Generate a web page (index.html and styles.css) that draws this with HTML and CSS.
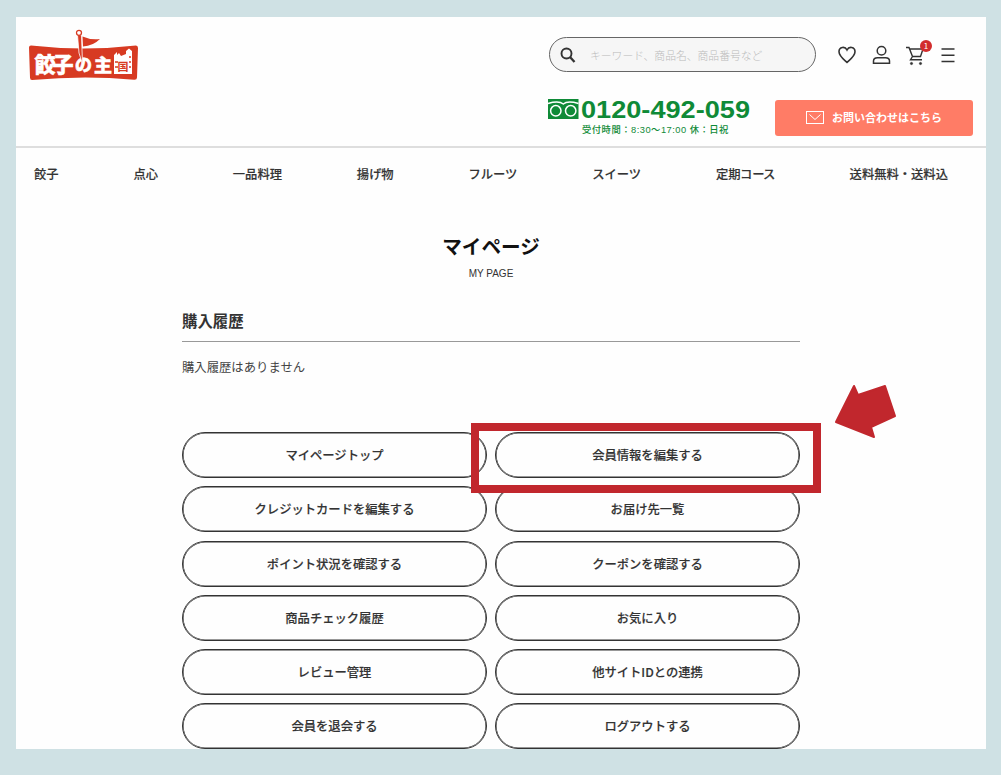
FILE: index.html
```
<!DOCTYPE html>
<html lang="ja">

<head>
    <meta charset="UTF-8">
    <meta name="viewport" content="width=device-width, initial-scale=1.0">
    <title>マイページ | 餃子の王国</title>
    <link rel="stylesheet" href="styles.css">
</head>

<body>
    <div class="page">
        <header class="header">
            <a class="logo" href="#">
                <svg width="112" height="54" viewBox="0 0 112 54">
                    <path d="M3 16.500 Q56 22.500 108 16.500 Q110 16.500 110 19 L109 48.500 Q109 51 106 50.700 Q56 46 4 51 Q2 51 2 48.500 L1 18.500 Q1 16.500 3 16.500Z" fill="#d73a22" />
                    <g class="logo-text">
                        <text x="6.500" y="42.500" font-size="21" textLength="39">餃子</text>
                        <text x="47" y="42" font-size="17">の</text>
                        <text x="66" y="42.500" font-size="18">主</text>
                    </g>
                    <path d="M86 45 V26 L89 23 V26 L91 24 L93 27 L98 25 V22 L101 19.500 L104 22 V45Z" fill="#fff" />
                    <path d="M87 33 H90 M87 38 H90 M101 28 H103 M101 33 H103 M101 38 H103" stroke="#d73a22" stroke-width="1.300" />
                    <text class="logo-country" x="89.500" y="42">国</text>
                    <path d="M49.500 6 L51 24 L54.500 35 L53.500 6Z" fill="#d73a22" stroke="#fff" stroke-width="0.800" />
                    <path d="M54.500 7.500 Q62 11 72 10 Q65 17 55 17.500Z" fill="#d73a22" />
                    <circle cx="51" cy="3.800" r="2.500" fill="#fff" stroke="#d73a22" stroke-width="1.300" />
                </svg>
            </a>
            <div class="header-right">
                <div class="tools">
                    <form class="search">
                        <svg width="16" height="16" viewBox="0 0 16 16" fill="none" stroke="#333">
                            <circle cx="6.500" cy="6.500" r="5" stroke-width="1.900" />
                            <path d="M10 10 L14.500 15" stroke-width="2.300" />
                        </svg>
                        <span>キーワード、商品名、商品番号など</span>
                    </form>
                    <div class="icons">
                        <svg width="20" height="20" viewBox="0 0 20 20" fill="none" stroke="#333" stroke-width="1.600">
                            <path d="M10 17.500 C7 14.700 2 11 2 6.800 C2 1.800 8 1 10 5 C12 1 18 1.800 18 6.800 C18 11 13 14.700 10 17.500Z" />
                        </svg>
                        <svg width="20" height="20" viewBox="0 0 20 20" fill="none" stroke="#333" stroke-width="1.500">
                            <circle cx="9.500" cy="5.700" r="4.300" />
                            <path d="M1.500 18.200 V16 Q1.500 12.700 5.500 12.700 H13.500 Q17.500 12.700 17.500 16 V18.200Z" />
                        </svg>
                        <div class="cart">
                            <svg width="20" height="20" viewBox="0 0 20 20" fill="none" stroke="#333" stroke-width="1.400">
                                <path d="M0 2.500 H3 L6.500 11.500 H14.500 L17 4 H4 M6.500 11.500 L4.500 14.700 H16" />
                                <circle cx="5.500" cy="18.500" r="1.100" fill="#333" stroke-width="0.800" />
                                <circle cx="14.500" cy="18.500" r="1.100" fill="#333" stroke-width="0.800" />
                            </svg>
                            <span class="badge">1</span>
                        </div>
                        <svg width="14" height="16" viewBox="0 0 14 16" stroke="#333" stroke-width="1.500">
                            <path d="M0.500 2 H13.500 M0.500 8.300 H13.500 M0.500 14.500 H13.500" />
                        </svg>
                    </div>
                </div>
                <div class="contact">
                    <div class="phone">
                        <svg width="204" height="22" viewBox="0 0 204 22">
                            <rect width="30.500" height="20" y="0" fill="#0f8a37" />
                            <g fill="none" stroke="#fff" stroke-width="1.500">
                                <path d="M0 4.500 Q11 1.500 15.300 5 Q19.500 1.500 30.500 4.500" />
                                <circle cx="7.800" cy="11.800" r="5.200" />
                                <circle cx="22.700" cy="11.800" r="5.200" />
                            </g>
                            <text class="phone-number" x="33" y="19" textLength="169" lengthAdjust="spacingAndGlyphs">0120-492-059</text>
                        </svg>
                        <p>受付時間：8:30〜17:00 休：日祝</p>
                    </div>
                    <a class="inquiry" href="#">
                        <svg width="18" height="13" viewBox="0 0 18 13" fill="none" stroke="#fff">
                            <rect x="0.500" y="0.500" width="17" height="12" />
                            <path d="M3.500 3.500 L9 8.500 L14.500 3.500" />
                        </svg>
                        <span>お問い合わせはこちら</span>
                    </a>
                </div>
            </div>
        </header>

        <nav class="nav">
            <a href="#">餃子</a>
            <a href="#">点心</a>
            <a href="#">一品料理</a>
            <a href="#" class="tight">揚げ物</a>
            <a href="#">フルーツ</a>
            <a href="#">スイーツ</a>
            <a href="#" class="tight">定期コース</a>
            <a href="#">送料無料・送料込</a>
        </nav>

        <main class="main">
            <h1>マイページ</h1>
            <p class="subtitle">MY PAGE</p>
            <h2>購入履歴</h2>
            <p class="empty">購入履歴はありません</p>
            <div class="menu">
                <a href="#">マイページトップ</a>
                <a href="#" class="edit">会員情報を編集する
                    <span class="frame"></span>
                    <svg class="arrow" width="64" height="56" viewBox="0 0 64 56">
                        <path d="M2 38 L20 2 L24 11 L51 2 L61 32 L37 43 L40 53Z" fill="#c1272d" stroke="#c1272d" stroke-width="2" stroke-linejoin="round" />
                    </svg>
                </a>
                <a href="#">クレジットカードを編集する</a>
                <a href="#">お届け先一覧</a>
                <a href="#">ポイント状況を確認する</a>
                <a href="#">クーポンを確認する</a>
                <a href="#">商品チェック履歴</a>
                <a href="#">お気に入り</a>
                <a href="#">レビュー管理</a>
                <a href="#">他サイトIDとの連携</a>
                <a href="#">会員を退会する</a>
                <a href="#">ログアウトする</a>
            </div>
        </main>
    </div>
</body>

</html>
```
FILE: styles.css
```
* {
    box-sizing: border-box;
}

body {
    margin: 0;
    height: 775px;
    padding: 17px 15px 26px 16px;
    background-color: #cfe1e4;
    color: #333;
    font-family: "Noto Sans CJK JP", sans-serif;
    overflow: hidden;
}

a {
    color: inherit;
    text-decoration: none;
}

h1, h2, p {
    margin: 0;
}

svg {
    display: block;
    flex-shrink: 0;
    overflow: visible;
}

.page {
    height: 732px;
    background-color: #fefefe;
}

.header {
    display: flex;
    justify-content: space-between;
    height: 131px;
    padding: 12px 13px 0 12px;
    border-bottom: 2px solid #dedede;
}

.logo-text {
    fill: #fff;
    stroke: #fff;
    stroke-width: 0.5px;
    font-weight: 900;
}

.logo-country {
    fill: #d73a22;
    font-size: 11px;
    font-weight: bold;
}

.header-right {
    width: 425px;
    padding-top: 8px;
}

.tools {
    display: flex;
    align-items: center;
    padding-left: 1px;
}

.search {
    display: flex;
    align-items: center;
    gap: 14px;
    width: 267px;
    height: 35px;
    padding-left: 10px;
    border: 1px solid #666;
    border-radius: 18px;
    background-color: #f6f6f6;
    color: #bbb;
    font-size: 10.8px;
    font-weight: 300;
}

.icons {
    display: flex;
    align-items: center;
    gap: 14.5px;
    margin-left: 21px;
}

.cart {
    position: relative;
}

.badge {
    position: absolute;
    top: -5px;
    left: 14px;
    width: 12px;
    height: 12px;
    border-radius: 50%;
    background-color: #d22d2d;
    color: #fff;
    font-size: 8px;
    line-height: 12px;
    text-align: center;
}

.contact {
    display: flex;
    justify-content: space-between;
    margin-top: 27px;
}

.phone {
    color: #0f8a37;
}

.phone-number {
    fill: #0f8a37;
    font-family: "Liberation Sans", sans-serif;
    font-size: 23.5px;
    font-weight: bold;
}

.phone p {
    padding: 2px 0 0 34px;
    font-family: "Liberation Sans", "Noto Sans CJK JP", sans-serif;
    font-size: 9.3px;
    font-weight: 500;
    line-height: 14px;
    letter-spacing: 0.5px;
    white-space: nowrap;
}

.inquiry {
    display: flex;
    align-items: center;
    justify-content: center;
    gap: 8px;
    width: 198px;
    height: 36px;
    padding-bottom: 2px;
    margin-top: 1px;
    border-radius: 3px;
    background-color: #ff7c66;
    color: #fff;
    font-size: 11px;
    font-weight: bold;
}

.nav {
    display: flex;
    justify-content: space-between;
    padding: 16px 38px 1px 18px;
    font-size: 12.3px;
    font-weight: 500;
    line-height: 20px;
    -webkit-text-stroke: 0.15px #333;
}

.nav .tight {
    font-feature-settings: "palt";
}

.main {
    width: 618px;
    margin: 45px 0 0 166px;
    text-align: center;
}

h1 {
    color: #111;
    font-size: 19.6px;
    line-height: 32px;
}

.subtitle {
    margin-top: 4px;
    font-family: "Liberation Sans", sans-serif;
    font-size: 10px;
    line-height: 16px;
}

h2 {
    height: 37px;
    margin-top: 23.3px;
    border-bottom: 1px solid #999;
    font-size: 15.4px;
    line-height: 30px;
    text-align: left;
}

.empty {
    margin-top: 15px;
    color: #444;
    font-size: 12.35px;
    line-height: 20px;
    text-align: left;
}

.menu {
    display: grid;
    grid-template-columns: 1fr 1fr;
    grid-auto-rows: 46px;
    gap: 8.1px 8px;
    margin-top: 55.1px;
}

.menu a {
    display: flex;
    align-items: center;
    justify-content: center;
    border: 1px solid #333;
    border-radius: 23px;
    box-shadow: inset 0 0 0 0.6px #333;
    font-size: 12.3px;
    font-weight: 500;
    -webkit-text-stroke: 0.15px #333;
}

.menu .edit {
    position: relative;
}

.frame {
    position: absolute;
    top: -10px;
    left: -25px;
    width: 350px;
    height: 70px;
    border: 8px solid #c1272d;
}

.arrow {
    position: absolute;
    top: -49px;
    left: 338px;
}
```
